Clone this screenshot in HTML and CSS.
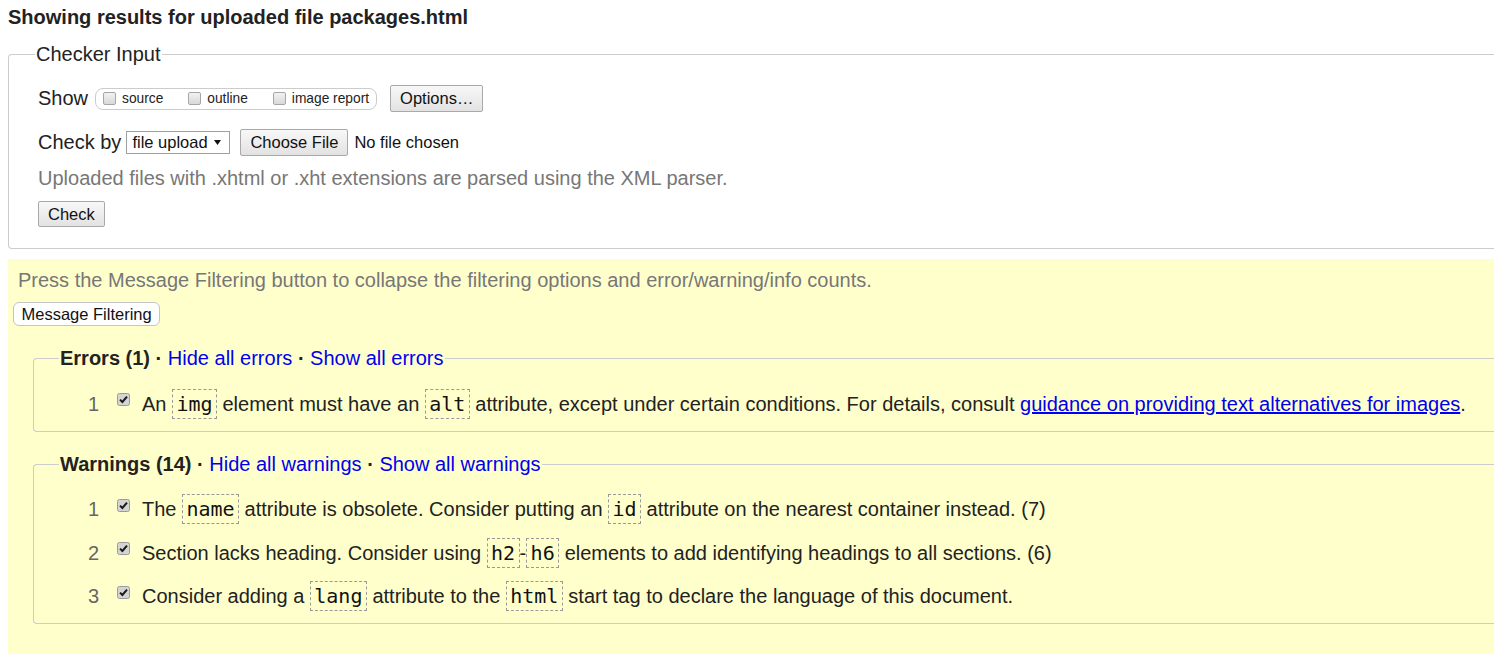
FILE: index.html
```html
<!DOCTYPE html>
<html lang="en">
<head>
<meta charset="utf-8">
<title>Showing results for uploaded file packages.html</title>
<link rel="stylesheet" href="styles.css">
</head>
<body>
<h1 class="title">Showing results for uploaded file packages.html</h1>
<fieldset class="checker">
  <legend class="checker-legend">Checker Input</legend>
  <div class="row show-row">
    <span class="row-label">Show</span>
    <div class="show-box">
      <span class="opt"><span class="box"></span>source</span>
      <span class="opt"><span class="box"></span>outline</span>
      <span class="opt"><span class="box"></span>image report</span>
    </div>
    <button class="btn btn-options" type="button">Options…</button>
  </div>
  <div class="row checkby-row">
    <span class="row-label">Check by</span>
    <span class="select"><span>file upload</span><svg class="caret" width="7" height="5" viewBox="0 0 7 5"><path d="M0 0 H7 L3.5 5 Z" fill="#111"/></svg></span>
    <button class="btn btn-file" type="button">Choose File</button>
    <span class="nofile">No file chosen</span>
  </div>
  <p class="hint">Uploaded files with .xhtml or .xht extensions are parsed using the XML parser.</p>
  <div class="check-wrap"><button class="btn btn-check" type="button">Check</button></div>
</fieldset>

<section class="results">
  <p class="hint filter-hint">Press the Message Filtering button to collapse the filtering options and error/warning/info counts.</p>
  <div class="filter-wrap"><button class="btn-filter" type="button">Message Filtering</button></div>

  <fieldset class="group">
    <legend class="group-legend"><strong>Errors (1)</strong> <b class="dot">·</b> <a class="lnk">Hide all errors</a> <b class="dot">·</b> <a class="lnk">Show all errors</a></legend>
    <ol class="msgs">
      <li class="msg">
        <span class="num">1</span>
        <span class="cb"><svg width="13" height="13" viewBox="0 0 13 13"><rect x="0.5" y="0.5" width="12" height="12" rx="2" fill="#d4d4d4" stroke="#9b9b9b"/><path d="M3 6.6 L5.4 9 L10 3.6" stroke="#1a1a1a" stroke-width="2" fill="none"/></svg></span>
        <span class="text">An <code>img</code> element must have an <code>alt</code> attribute, except under certain conditions. For details, consult <a class="lnk ul">guidance on providing text alternatives for images</a>.</span>
      </li>
    </ol>
  </fieldset>

  <fieldset class="group">
    <legend class="group-legend"><strong>Warnings (14)</strong> <b class="dot">·</b> <a class="lnk">Hide all warnings</a> <b class="dot">·</b> <a class="lnk">Show all warnings</a></legend>
    <ol class="msgs">
      <li class="msg">
        <span class="num">1</span>
        <span class="cb"><svg width="13" height="13" viewBox="0 0 13 13"><rect x="0.5" y="0.5" width="12" height="12" rx="2" fill="#d4d4d4" stroke="#9b9b9b"/><path d="M3 6.6 L5.4 9 L10 3.6" stroke="#1a1a1a" stroke-width="2" fill="none"/></svg></span>
        <span class="text">The <code>name</code> attribute is obsolete. Consider putting an <code>id</code> attribute on the nearest container instead. (7)</span>
      </li>
      <li class="msg">
        <span class="num">2</span>
        <span class="cb"><svg width="13" height="13" viewBox="0 0 13 13"><rect x="0.5" y="0.5" width="12" height="12" rx="2" fill="#d4d4d4" stroke="#9b9b9b"/><path d="M3 6.6 L5.4 9 L10 3.6" stroke="#1a1a1a" stroke-width="2" fill="none"/></svg></span>
        <span class="text">Section lacks heading. Consider using <code>h2</code>-<code>h6</code> elements to add identifying headings to all sections. (6)</span>
      </li>
      <li class="msg">
        <span class="num">3</span>
        <span class="cb"><svg width="13" height="13" viewBox="0 0 13 13"><rect x="0.5" y="0.5" width="12" height="12" rx="2" fill="#d4d4d4" stroke="#9b9b9b"/><path d="M3 6.6 L5.4 9 L10 3.6" stroke="#1a1a1a" stroke-width="2" fill="none"/></svg></span>
        <span class="text">Consider adding a <code>lang</code> attribute to the <code>html</code> start tag to declare the language of this document.</span>
      </li>
    </ol>
  </fieldset>
</section>
</body>
</html>
```

FILE: styles.css
```css
html, body {
  overflow: hidden;
}
body {
  margin: 0;
  padding: 6px 0 0 8px;
  font-family: "Liberation Sans", Arial, sans-serif;
  font-size: 20px;
  color: #222;
  background: #fff;
}
.title {
  margin: 0;
  font-size: 20px;
  font-weight: bold;
  line-height: 23px;
}

/* Checker input */
.checker {
  margin: 14px 0 0 0;
  padding: 0 0 21px 29px;
  border: 1px solid #ccc;
  border-right: none;
  border-radius: 4px 0 0 4px;
  min-width: 0;
}
.checker-legend {
  padding: 0 1px;
  margin-left: -3px;
  line-height: 23px;
  font-size: 20px;
}
.row {
  display: flex;
  align-items: center;
}
.row-label {
  line-height: 23px;
}
.show-row {
  margin-top: 19px;
  height: 27px;
}
.show-box {
  margin-left: 7px;
  height: 22px;
  box-sizing: border-box;
  border: 1px solid #ccc;
  border-radius: 8px;
  display: flex;
  align-items: center;
  gap: 25px;
  padding: 0 7px;
  font-size: 13.75px;
  background: #fff;
}
.opt {
  display: flex;
  align-items: center;
  gap: 6px;
}
.box {
  width: 13px;
  height: 13px;
  box-sizing: border-box;
  border: 1px solid #a6a6a6;
  border-radius: 2px;
  background: linear-gradient(#f2f2f2, #d9d9d9);
}
.btn {
  font-family: "Liberation Sans", Arial, sans-serif;
  font-size: 16.5px;
  color: #111;
  border: 1px solid #a9a9a9;
  border-radius: 2px;
  background: linear-gradient(#f8f8f8, #e2e2e2);
  padding: 0 9px;
  margin: 0;
  box-sizing: border-box;
  height: 27px;
  line-height: 25px;
}
.btn-options {
  margin-left: 13px;
}
.checkby-row {
  margin-top: 17px;
  height: 27px;
}
.select {
  margin-left: 5px;
  width: 104px;
  height: 23px;
  box-sizing: border-box;
  border: 1px solid #a0a0a0;
  background: #fff;
  font-size: 16.5px;
  padding: 0 8px 0 5px;
  display: flex;
  align-items: center;
  justify-content: space-between;
  color: #111;
}
.caret {
  display: block;
}
.btn-file {
  margin-left: 10px;
}
.nofile {
  margin-left: 6px;
  font-size: 16.5px;
  color: #111;
}
.hint {
  margin: 11px 0 0;
  color: #777;
  line-height: 23px;
}
.check-wrap {
  margin-top: 11px;
  height: 26px;
}
.btn-check {
  height: 26px;
  line-height: 24px;
}

/* Results */
.results {
  margin-top: 10px;
  background: #ffc;
  padding: 10px 0 30px 0;
}
.filter-hint {
  margin: 0 0 0 10px;
}
.filter-wrap {
  margin-top: 10px;
  padding-left: 5px;
  height: 24px;
}
.btn-filter {
  font-family: "Liberation Sans", Arial, sans-serif;
  font-size: 16.5px;
  color: #111;
  height: 24px;
  line-height: 22px;
  padding: 0 7.5px;
  margin: 0;
  box-sizing: border-box;
  border: 1px solid #c4c4c4;
  border-radius: 6px;
  background: #fff;
}
.group {
  margin: 21px 0 0 25px;
  padding: 0 0 12px 26px;
  border: 1px solid #ccc;
  border-right: none;
  border-radius: 4px 0 0 4px;
  min-width: 0;
}
.group-legend {
  padding: 0 1px;
  margin-left: -1px;
  line-height: 23px;
  font-size: 20px;
  white-space: nowrap;
}
.dot {
  color: #222;
}
.lnk {
  color: #0000ee;
  text-decoration: none;
}
.lnk.ul {
  text-decoration: underline;
}
.msgs {
  list-style: none;
  margin: 18.5px 0 0;
  padding: 0;
}
.msg {
  display: flex;
  align-items: flex-start;
  height: 30px;
}
.msg + .msg {
  margin-top: 13.5px;
}
.num {
  margin-left: 28px;
  width: 11px;
  color: #666;
  line-height: 30px;
}
.cb {
  margin-left: 18px;
  margin-top: 4.5px;
  width: 13px;
  height: 13px;
}
.cb svg {
  display: block;
}
.text {
  margin-left: 12px;
  line-height: 30px;
  white-space: nowrap;
}
code {
  display: inline-block;
  font-family: "DejaVu Sans Mono", monospace;
  font-size: 20px;
  line-height: 28px;
  padding: 0 3.4px;
  border: 1px dashed #999;
  color: #111;
}
```
